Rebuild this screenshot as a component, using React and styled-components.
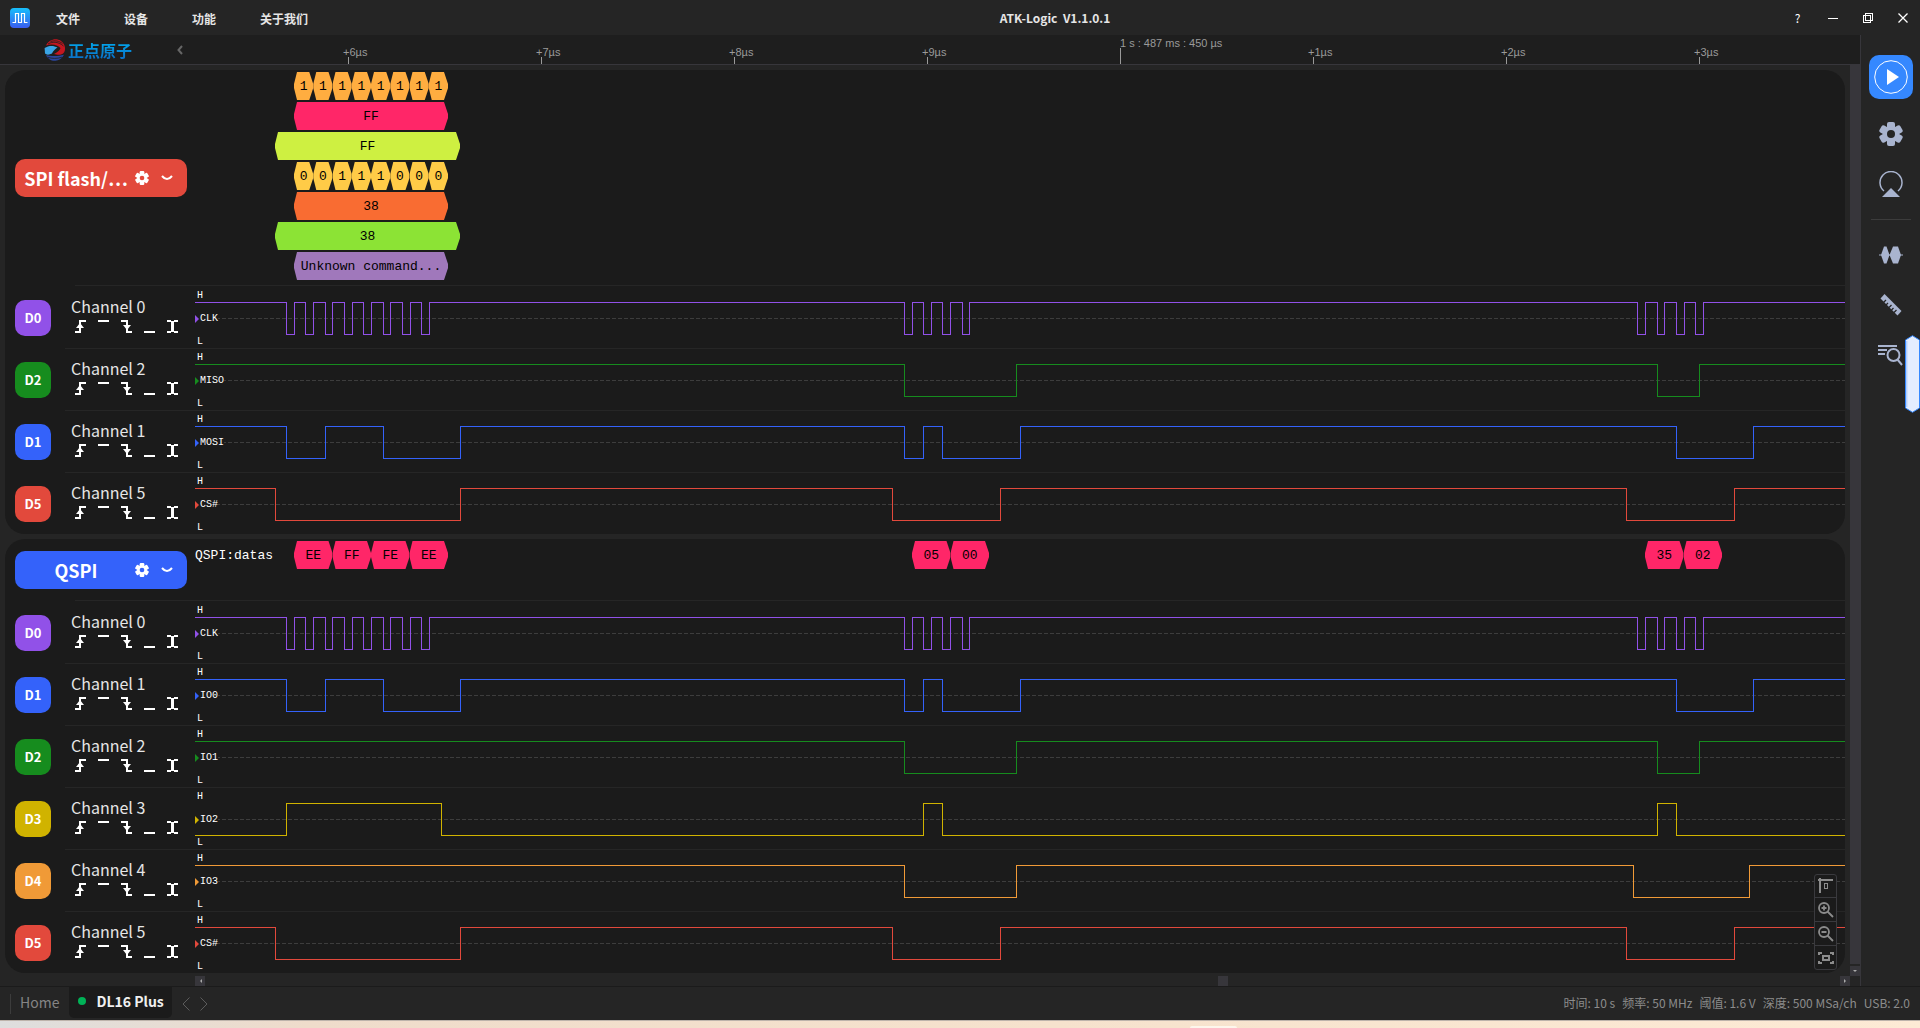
import React, { useState } from "react";
import styled, { createGlobalStyle } from "styled-components";

const COLORS = {
  D0: "#9151e8",
  D1: "#3462fa",
  D2: "#168c1e",
  D3: "#d0b300",
  D4: "#f09a37",
  D5: "#e2493c",
};

// edges are x offsets in px from the start of the time axis
const WAVES = {
  D0: { start: 1, edges: [91, 99, 110, 118, 130, 137, 149, 157, 168, 176, 188, 195, 207, 215, 226, 234, 709, 717, 728, 736, 747, 755, 767, 774, 1442, 1450, 1462, 1469, 1481, 1489, 1500, 1508] },
  D1: { start: 1, edges: [91, 130, 188, 265, 709, 728, 747, 825, 1481, 1558] },
  D2: { start: 1, edges: [709, 821, 1462, 1504] },
  D3: { start: 0, edges: [91, 246, 728, 747, 1462, 1481] },
  D4: { start: 1, edges: [709, 821, 1438, 1554] },
  D5: { start: 1, edges: [80, 265, 697, 805, 1431, 1539] },
};

const GROUPS = [
  {
    name: "SPI flash/…",
    color: "#e2493c",
    lanes: [
      { blocks: [{ gap: 99, width: 154, color: "#ffad40", cells: ["1", "1", "1", "1", "1", "1", "1", "1"] }] },
      { blocks: [{ gap: 99, width: 154, color: "#ff2668", cells: ["FF"] }] },
      { blocks: [{ gap: 80, width: 185, color: "#cef041", cells: ["FF"] }] },
      { blocks: [{ gap: 99, width: 154, color: "#ffcb47", cells: ["0", "0", "1", "1", "1", "0", "0", "0"] }] },
      { blocks: [{ gap: 99, width: 154, color: "#f96c32", cells: ["38"] }] },
      { blocks: [{ gap: 80, width: 185, color: "#8ce335", cells: ["38"] }] },
      { blocks: [{ gap: 99, width: 154, color: "#a078bb", cells: ["Unknown command..."] }] },
    ],
    channels: [
      { id: "D0", name: "Channel 0", signal: "CLK" },
      { id: "D2", name: "Channel 2", signal: "MISO" },
      { id: "D1", name: "Channel 1", signal: "MOSI" },
      { id: "D5", name: "Channel 5", signal: "CS#" },
    ],
  },
  {
    name: "QSPI",
    color: "#3462fa",
    lanes: [
      {
        label: "QSPI:datas",
        blocks: [
          { gap: 99, width: 154, color: "#ff2668", cells: ["EE", "FF", "FE", "EE"] },
          { gap: 464, width: 77, color: "#ff2668", cells: ["05", "00"] },
          { gap: 656, width: 77, color: "#ff2668", cells: ["35", "02"] },
        ],
      },
    ],
    channels: [
      { id: "D0", name: "Channel 0", signal: "CLK" },
      { id: "D1", name: "Channel 1", signal: "IO0" },
      { id: "D2", name: "Channel 2", signal: "IO1" },
      { id: "D3", name: "Channel 3", signal: "IO2" },
      { id: "D4", name: "Channel 4", signal: "IO3" },
      { id: "D5", name: "Channel 5", signal: "CS#" },
    ],
  },
];

const TICKS = ["+6µs", "+7µs", "+8µs", "+9µs", "1 s : 487 ms : 450 µs", "+1µs", "+2µs", "+3µs"];

const TRIGGERS = [
  { label: "Rising edge", line: "M0 12H5V1H11", head: "1,8 5,3 9,8" },
  { label: "High level", line: "M0 1H11" },
  { label: "Falling edge", line: "M0 1H6V12H11", head: "2,5 6,10 10,5" },
  { label: "Low level", line: "M0 12H11" },
  { label: "Any edge", line: "M0 1H4M7 1H11M0 12H4M7 12H11", head: "4,1 7,1 7,12 4,12" },
];

const GlobalStyle = createGlobalStyle`
  *{
    box-sizing: border-box;
  }
  body{
    margin: 0;
    background: #252525;
    color: #e6e6e6;
    font-family: "Noto Sans CJK SC", "Noto Sans", sans-serif;
    font-size: 12px;
  }
  button{
    padding: 0;
    border: 0;
    background: none;
    color: inherit;
    font: inherit;
    cursor: pointer;
  }
  svg{
    display: block;
    flex: none;
  }
`;

function wavePath({ start, edges }) {
  const y = (level) => (level ? 15.5 : 47.5);
  let level = start;
  let d = `M0 ${y(level)}`;
  edges.forEach((x) => {
    level = level ? 0 : 1;
    d += `H${x + 0.5}V${y(level)}`;
  });
  return d + "H6000";
}

function Gear({ size, color, hole }) {
  return (
    <svg width={size} height={size} viewBox="0 0 24 24" fill={color} aria-hidden="true">
      <rect x="8" y="0" width="8" height="24" rx="2" />
      <rect x="8" y="0" width="8" height="24" rx="2" transform="rotate(60 12 12)" />
      <rect x="8" y="0" width="8" height="24" rx="2" transform="rotate(120 12 12)" />
      <circle cx="12" cy="12" r="8" />
      <circle cx="12" cy="12" r="4" fill={hole} />
    </svg>
  );
}

function TitleBar() {
  return (
    <TitleContainer>
      <AppIcon width="20" height="20" viewBox="0 0 20 20" aria-hidden="true">
        <defs>
          <linearGradient id="appIcon" x1="0" y1="0" x2="0" y2="1">
            <stop offset="0" stopColor="#17c0fb" />
            <stop offset="1" stopColor="#3a5cf0" />
          </linearGradient>
        </defs>
        <rect width="20" height="20" rx="4" fill="url(#appIcon)" />
        <path d="M2.5 14.5H5.5V5.5H8.5V14.5H11.5V5.5H14.5V14.5H17.5" fill="none" stroke="#fff" strokeWidth="1.2" />
      </AppIcon>
      <Menu>
        {["文件", "设备", "功能", "关于我们"].map((item) => (
          <MenuItem key={item}>{item}</MenuItem>
        ))}
      </Menu>
      <Title>ATK-Logic&nbsp; V1.1.0.1</Title>
      <WindowButton aria-label="Help">?</WindowButton>
      <WindowButton aria-label="Minimize">
        <svg width="10" height="10"><path d="M0 5.5H10" stroke="#fff" /></svg>
      </WindowButton>
      <WindowButton aria-label="Restore">
        <svg width="10" height="10" fill="none" stroke="#fff" shapeRendering="crispEdges">
          <path d="M2.5 0.5H9.5V7.5H2.5ZM0.5 2.5H7.5V9.5H0.5Z" />
        </svg>
      </WindowButton>
      <WindowButton aria-label="Close">
        <svg width="10" height="10"><path d="M0.5 0.5L9.5 9.5M9.5 0.5L0.5 9.5" stroke="#fff" strokeWidth="1.3" /></svg>
      </WindowButton>
    </TitleContainer>
  );
}

function Ruler() {
  return (
    <RulerContainer>
      <Brand>
        <svg width="22" height="22" viewBox="0 0 22 22" fill="none" aria-hidden="true">
          <path d="M2 6.5C6 -1.5 17 -2 20.5 6.5C22 11 20.5 15 17 15.5C15 16 12 15.5 10 15C14 13 16 11 16.5 9C13 5.5 8 4.5 2 6.5Z" fill="#c4161f" />
          <path d="M4 5C9 2 15 3 19.5 7M6.5 2.6C11 1 15 2 18.5 4.5" stroke="#1e1e1e" strokeWidth="0.8" />
          <path d="M0.6 9C5 6 10 6.5 13.5 8.5C11 10 9 12 8 14.5C5 16 2.5 16 1 14.5Z" fill="#3aa5e6" />
          <path d="M2 16C7 17.5 14 17.5 20 15.8C17 21 13 21.8 10.5 21.8C7 21.8 3.5 19.5 2 16Z" fill="#2b459c" />
          <path d="M3.5 18.2C8 19.8 13 19.8 18 18.2" stroke="#1e1e1e" strokeWidth="0.8" />
        </svg>
        <BrandName>正点原子</BrandName>
        <Collapse aria-label="Collapse channel list">
          <svg width="6" height="10" fill="none"><path d="M5 1L1.5 5L5 9" stroke="#666" strokeWidth="2" /></svg>
        </Collapse>
      </Brand>
      <Ticks>
        {TICKS.map((text) => (
          <Tick key={text} $major={text.includes("s :")}>
            <span>{text}</span>
          </Tick>
        ))}
      </Ticks>
    </RulerContainer>
  );
}

function Channel({ id, name, signal, first }) {
  const color = COLORS[id];
  return (
    <ChannelRow>
      <Chip $color={color}>{id}</Chip>
      <ChannelBody $first={first}>
        <ChannelInfo>
          <ChannelName>{name}</ChannelName>
          <Triggers>
            {TRIGGERS.map((t) => (
              <button key={t.label} aria-label={t.label}>
                <svg width="11" height="13">
                  <path d={t.line} fill="none" stroke="#fff" strokeWidth="2" />
                  {t.head && <polygon points={t.head} fill="#fff" />}
                </svg>
              </button>
            ))}
          </Triggers>
        </ChannelInfo>
        <Lane>
          <Wave shapeRendering="crispEdges" aria-hidden="true">
            <path d="M3 31.5H6000" stroke="#3d3d3d" strokeDasharray="4 2" />
            <path d={wavePath(WAVES[id])} fill="none" stroke={color} />
          </Wave>
          <LaneLabels>
            <Level>H</Level>
            <Signal>
              <svg width="4" height="8"><polygon points="0,0 4,4 0,8" fill={color} /></svg>
              {signal}
            </Signal>
            <Level>L</Level>
          </LaneLabels>
        </Lane>
      </ChannelBody>
    </ChannelRow>
  );
}

function Decoder({ name, color, lanes }) {
  return (
    <DecoderRow>
      <DecoderSide>
        <DecoderChip $color={color}>
          <DecoderName>{name}</DecoderName>
          <DecoderActions>
            <button aria-label={`${name} settings`}>
              <Gear size={14} color="#fff" hole={color} />
            </button>
            <button aria-label={`Toggle ${name}`}>
              <svg width="12" height="6" fill="none"><path d="M1 1Q6 7 11 1" stroke="#fff" strokeWidth="2" /></svg>
            </button>
          </DecoderActions>
        </DecoderChip>
      </DecoderSide>
      <Annotations>
        {lanes.map((lane, i) => (
          <AnnotationLane key={i}>
            {lane.blocks.map((block, j) => (
              <React.Fragment key={j}>
                <LaneGap $width={block.gap}>{j === 0 && lane.label}</LaneGap>
                <Block $width={block.width}>
                  {block.cells.map((cell, k) => (
                    <Cell key={k} $color={block.color}>{cell}</Cell>
                  ))}
                </Block>
              </React.Fragment>
            ))}
          </AnnotationLane>
        ))}
      </Annotations>
    </DecoderRow>
  );
}

function ZoomTools() {
  const stroke = "#8c8c8c";
  return (
    <ToolBox>
      <ToolButton aria-label="Go to zero">
        <svg width="16" height="16" fill="none" stroke={stroke}>
          <path d="M0 2H15M2 0V15" strokeWidth="2" />
          <rect x="6.5" y="5.5" width="3" height="5" />
        </svg>
      </ToolButton>
      <ToolButton aria-label="Zoom in">
        <svg width="16" height="16" fill="none" stroke={stroke} strokeWidth="1.8">
          <circle cx="6" cy="6" r="5" />
          <path d="M9.5 9.5L15 15M3.5 6H8.5M6 3.5V8.5" />
        </svg>
      </ToolButton>
      <ToolButton aria-label="Zoom out">
        <svg width="16" height="16" fill="none" stroke={stroke} strokeWidth="1.8">
          <circle cx="6" cy="6" r="5" />
          <path d="M9.5 9.5L15 15M3.5 6H8.5" />
        </svg>
      </ToolButton>
      <ToolButton aria-label="Fit to window">
        <svg width="16" height="14" fill="none" stroke={stroke} strokeWidth="2">
          <path d="M1 4V2H4M12 2H15V4M15 10V12H12M4 12H1V10" />
          <rect x="5" y="5" width="6" height="4" />
        </svg>
      </ToolButton>
    </ToolBox>
  );
}

function SideBar({ running, onRun }) {
  return (
    <SideContainer>
      <RunButton aria-label="Run" aria-pressed={running} onClick={onRun}>
        <svg width="34" height="34">
          <circle cx="17" cy="17" r="16.3" fill="none" stroke="#fff" />
          <polygon points="13,9 25,17 13,25" fill="#fff" />
        </svg>
      </RunButton>
      <SideButton aria-label="Settings">
        <Gear size={24} color="#a9b4cf" hole="#252525" />
      </SideButton>
      <SideButton aria-label="Trigger">
        <svg width="24" height="26" fill="none">
          <path d="M5 20A11 11 0 1 1 19 20" stroke="#a9b4cf" strokeWidth="1.5" />
          <polygon points="3,26 12,17 21,26" fill="#a9b4cf" />
        </svg>
      </SideButton>
      <SideRule />
      <SideButton aria-label="Decoders">
        <svg width="24" height="18" fill="#a9b4cf">
          <path d="M0 8.5H24V9.5H0Z" />
          <path d="M5 0.5H7.5L10.5 9L7.5 17.5H5L2 9Z" />
          <path d="M14 0.5H19L22 9L19 17.5H14L10.5 9Z" />
        </svg>
      </SideButton>
      <SideButton aria-label="Measure">
        <svg width="22" height="22">
          <path d="M4.5 0L21.5 17L17.5 21.5L0.5 4.5Z" fill="#a9b4cf" />
          <path d="M3.5 8.5L6 6M6 11L8 9M9 13.5L11.5 11M11.5 16L13.5 14M14 18.5L16.5 16" stroke="#252525" strokeWidth="1.3" />
        </svg>
      </SideButton>
      <SideButton aria-label="Search">
        <svg width="26" height="22" fill="none" stroke="#a9b4cf" strokeWidth="2">
          <path d="M0 2H19M0 6H9M0 10H7" />
          <circle cx="15.5" cy="11" r="6" />
          <path d="M19.5 15.5L24 21" />
        </svg>
      </SideButton>
      <Handle aria-label="Open panel">
        <svg width="15" height="78">
          <path d="M0.5 5L7.5 0.7L14.5 5V73L7.5 77.3L0.5 73Z" fill="#e4edff" stroke="#3588ff" />
          <path d="M1.8 6V72" stroke="#9fc4ff" />
        </svg>
      </Handle>
    </SideContainer>
  );
}

function StatusBar() {
  return (
    <StatusContainer>
      <HomeLink href="#home">Home</HomeLink>
      <DeviceTab>DL16 Plus</DeviceTab>
      <TabArrow aria-label="Previous tab">
        <svg width="8" height="14" fill="none"><path d="M7.5 0.5L1 7L7.5 13.5" stroke="#5c5c5c" /></svg>
      </TabArrow>
      <TabArrow aria-label="Next tab">
        <svg width="8" height="14" fill="none"><path d="M0.5 0.5L7 7L0.5 13.5" stroke="#5c5c5c" /></svg>
      </TabArrow>
      <Info>
        <span>时间: 10 s</span>
        <span>频率: 50 MHz</span>
        <span>阈值: 1.6 V</span>
        <span>深度: 500 MSa/ch</span>
        <span>USB: 2.0</span>
      </Info>
    </StatusContainer>
  );
}

function App() {
  const [running, setRunning] = useState(false);
  return (
    <Page>
      <GlobalStyle />
      <TitleBar />
      <Main>
        <Workspace>
          <Ruler />
          <Body>
            <Canvas>
              {GROUPS.map((group) => (
                <Group key={group.name}>
                  <Decoder {...group} />
                  <Divider />
                  {group.channels.map((channel, i) => (
                    <Channel key={channel.id} {...channel} first={i === 0} />
                  ))}
                </Group>
              ))}
              <HScroll>
                <ScrollBox>
                  <svg width="3" height="4"><polygon points="3,0 1,2 3,4" fill="#aaa" /></svg>
                </ScrollBox>
                <Track $grow={1013} />
                <ScrollBox />
                <Track $grow={612} />
                <ScrollBox>
                  <svg width="3" height="4"><polygon points="0,0 2,2 0,4" fill="#aaa" /></svg>
                </ScrollBox>
              </HScroll>
              <ZoomTools />
            </Canvas>
            <VScroll>
              <VThumb />
              <ScrollBox>
                <svg width="4" height="3"><polygon points="0,0 4,0 2,2" fill="#aaa" /></svg>
              </ScrollBox>
            </VScroll>
          </Body>
        </Workspace>
        <SideBar running={running} onRun={() => setRunning(!running)} />
      </Main>
      <StatusBar />
      <Desktop>
        <DesktopTab />
      </Desktop>
    </Page>
  );
}

const Page = styled.div`
  display: flex;
  flex-direction: column;
  min-height: 100vh;
  overflow: hidden;
`;

const TitleContainer = styled.header`
  display: flex;
  align-items: center;
  height: 35px;
  padding-left: 10px;
`;

const AppIcon = styled.svg`
  flex: none;
`;

const Menu = styled.nav`
  display: flex;
  margin-left: 4px;
`;

const MenuItem = styled.button`
  padding: 2px 22px 0;
  height: 35px;
  font-weight: 700;
`;

const Title = styled.h1`
  flex: 1;
  margin: 0;
  font-size: 12px;
  font-weight: 700;
  text-align: center;
`;

const WindowButton = styled.button`
  display: flex;
  align-items: center;
  justify-content: center;
  width: 35px;
  height: 35px;
  color: #fff;
`;

const Main = styled.main`
  display: flex;
  flex: 1;
`;

const Workspace = styled.div`
  display: flex;
  flex-direction: column;
  flex: 1;
  min-width: 0;
`;

const RulerContainer = styled.div`
  display: flex;
  height: 30px;
  background: #1e1e1e;
  border-bottom: 1px solid #37363b;
`;

const Brand = styled.div`
  display: flex;
  align-items: center;
  flex: none;
  width: 195px;
  padding-left: 44px;
`;

const BrandName = styled.span`
  margin-left: 2px;
  font-size: 16px;
  font-weight: 700;
  line-height: 20px;
  color: transparent;
  background: linear-gradient(#00b0f4, #0b6cc4);
  background-clip: text;
`;

const Collapse = styled.button`
  margin-left: auto;
  margin-right: 12px;
`;

const Ticks = styled.div`
  display: flex;
  flex: 1;
  min-width: 0;
  padding-left: 153px;
  overflow: hidden;
`;

const Tick = styled.div`
  display: flex;
  flex-direction: column;
  flex: none;
  justify-content: flex-end;
  width: 193px;
  color: #9a9a9a;
  font-family: "Liberation Sans", sans-serif;
  font-size: 11px;
  line-height: 10px;
  white-space: pre;
  span{
    margin-left: ${({ $major }) => ($major ? "0" : "-5px")};
  }
  &::after{
    content: "";
    width: 1px;
    height: ${({ $major }) => ($major ? "16px" : "7px")};
    background: #9a9a9a;
  }
`;

const Body = styled.div`
  display: flex;
  flex: 1;
`;

const Canvas = styled.div`
  position: relative;
  flex: 1;
  min-width: 0;
  padding-top: 5px;
`;

const Group = styled.section`
  margin: 0 5px;
  overflow: hidden;
  background: #1b1b1b;
  border-radius: 20px;
  & + &{
    margin-top: 5px;
  }
`;

const Divider = styled.hr`
  height: 1px;
  margin: 0 0 0 70px;
  border: 0;
  background: #262626;
`;

const DecoderRow = styled.div`
  display: flex;
  min-height: 61px;
`;

const DecoderSide = styled.div`
  display: flex;
  align-items: center;
  flex: none;
  width: 190px;
  padding-left: 10px;
`;

const DecoderChip = styled.div`
  display: flex;
  align-items: center;
  width: 172px;
  height: 38px;
  padding: 0 14px 0 8px;
  gap: 6px;
  border-radius: 10px;
  background: ${({ $color }) => $color};
  color: #fff;
`;

const DecoderName = styled.span`
  flex: 1;
  font-size: 18px;
  font-weight: 700;
  line-height: 24px;
  text-align: center;
  white-space: nowrap;
`;

const DecoderActions = styled.div`
  display: flex;
  align-items: center;
  gap: 12px;
`;

const Annotations = styled.div`
  flex: 1;
  min-width: 0;
  padding: 2px 0 3px;
  overflow: hidden;
`;

const AnnotationLane = styled.div`
  display: flex;
  height: 28px;
  margin-bottom: 2px;
  font-family: "Liberation Mono", monospace;
  font-size: 13px;
  line-height: 30px;
  white-space: nowrap;
`;

const LaneGap = styled.div`
  flex: none;
  width: ${({ $width }) => $width}px;
  color: #fff;
`;

const Block = styled.div`
  display: flex;
  flex: none;
  width: ${({ $width }) => $width}px;
`;

const Cell = styled.div`
  flex: 1;
  background: ${({ $color }) => $color};
  color: #000;
  text-align: center;
  clip-path: polygon(0 12px, 3px 0, calc(100% - 4px) 0, 100% 12px, 100% 16px, calc(100% - 4px) 100%, 3px 100%, 0 16px);
`;

const ChannelRow = styled.div`
  display: flex;
  padding-left: 10px;
`;

const Chip = styled.div`
  flex: none;
  width: 36px;
  height: 36px;
  margin: 14px 14px 0 0;
  border-radius: 10px;
  background: ${({ $color }) => $color};
  color: #fff;
  font-size: 13px;
  font-weight: 700;
  line-height: 35px;
  text-align: center;
`;

const ChannelBody = styled.div`
  display: flex;
  flex: 1;
  min-width: 0;
  border-top: 1px solid ${({ $first }) => ($first ? "transparent" : "#262626")};
`;

const ChannelInfo = styled.div`
  flex: none;
  width: 130px;
  padding: 9px 0 0 6px;
`;

const ChannelName = styled.div`
  font-size: 16px;
  line-height: 20px;
`;

const Triggers = styled.div`
  display: flex;
  gap: 12px;
  margin: 4px 0 0 4px;
`;

const Lane = styled.div`
  display: grid;
  flex: 1;
  min-width: 0;
  grid-template-columns: minmax(0, 1fr);
`;

const Wave = styled.svg`
  grid-area: 1 / 1;
  width: 100%;
  height: 61px;
`;

const LaneLabels = styled.div`
  display: flex;
  flex-direction: column;
  justify-content: space-between;
  grid-area: 1 / 1;
  justify-self: start;
  padding-top: 3px;
  color: #fff;
  font-family: "Liberation Mono", monospace;
  font-size: 10px;
  line-height: 12px;
`;

const Level = styled.span`
  padding-left: 2px;
`;

const Signal = styled.span`
  display: flex;
  align-items: center;
  gap: 1px;
  background: #1b1b1b;
`;

const HScroll = styled.div`
  display: flex;
  margin: 3px 0 0 195px;
`;

const ScrollBox = styled.div`
  display: flex;
  align-items: center;
  justify-content: center;
  flex: none;
  width: 10px;
  height: 10px;
  background: #37363b;
`;

const Track = styled.div`
  flex: ${({ $grow }) => $grow};
`;

const VScroll = styled.div`
  display: flex;
  flex-direction: column;
  gap: 2px;
  width: 10px;
  padding-bottom: 10px;
`;

const VThumb = styled.div`
  flex: 1;
  background: #37363b;
`;

const ToolBox = styled.div`
  position: absolute;
  right: 13px;
  bottom: 16px;
  width: 23px;
  border: 1px solid #3a3a3e;
  border-radius: 3px;
  background: #1b1b1b;
`;

const ToolButton = styled.button`
  display: flex;
  align-items: center;
  justify-content: center;
  width: 100%;
  height: 22px;
  & + &{
    height: 24px;
    border-top: 1px solid #3a3a3e;
  }
`;

const SideContainer = styled.aside`
  position: relative;
  display: flex;
  flex-direction: column;
  align-items: center;
  flex: none;
  width: 60px;
  padding-top: 20px;
  border-left: 1px solid #37363b;
`;

const SideButton = styled.button`
  display: flex;
  align-items: center;
  justify-content: center;
  width: 44px;
  height: 50px;
`;

const RunButton = styled(SideButton)`
  height: 44px;
  margin-bottom: 10px;
  border-radius: 10px;
  background: #3588ff;
`;

const SideRule = styled.hr`
  width: 40px;
  height: 1px;
  margin: 10px 0;
  border: 0;
  background: #3c3c3c;
`;

const Handle = styled.button`
  position: absolute;
  top: 300px;
  right: 0;
`;

const StatusContainer = styled.footer`
  display: flex;
  align-items: center;
  height: 34px;
  padding: 0 10px;
  border-top: 1px solid #1b1b1b;
  color: #8c8c8c;
`;

const HomeLink = styled.a`
  padding: 0 10px 4px 9px;
  border-left: 1px solid #3c3c3c;
  color: #858585;
  font-size: 14px;
  line-height: 16px;
  text-decoration: none;
`;

const DeviceTab = styled.button`
  display: flex;
  align-items: center;
  align-self: flex-start;
  gap: 10px;
  height: 31px;
  padding: 0 8px 3px 9px;
  border-radius: 0 0 5px 5px;
  background: #1b1b1b;
  color: #f0f0f0;
  font-size: 14px;
  font-weight: 700;
  &::before{
    content: "";
    width: 8px;
    height: 8px;
    border-radius: 50%;
    background: #00b257;
  }
`;

const TabArrow = styled.button`
  margin-left: 10px;
`;

const Info = styled.div`
  display: flex;
  gap: 7px;
  margin-left: auto;
  line-height: 16px;
  padding-bottom: 2px;
`;

const Desktop = styled.div`
  display: flex;
  align-items: flex-end;
  height: 8px;
  padding-left: 62%;
  border-top: 1px solid #bdb3ab;
  background: linear-gradient(90deg, #dedede, #efdccb 16%, #f6e2cd 55%, #fdead5);
`;

const DesktopTab = styled.div`
  width: 47px;
  height: 2px;
  border-radius: 3px 3px 0 0;
  background: #fdf6ec;
`;

export default App;
